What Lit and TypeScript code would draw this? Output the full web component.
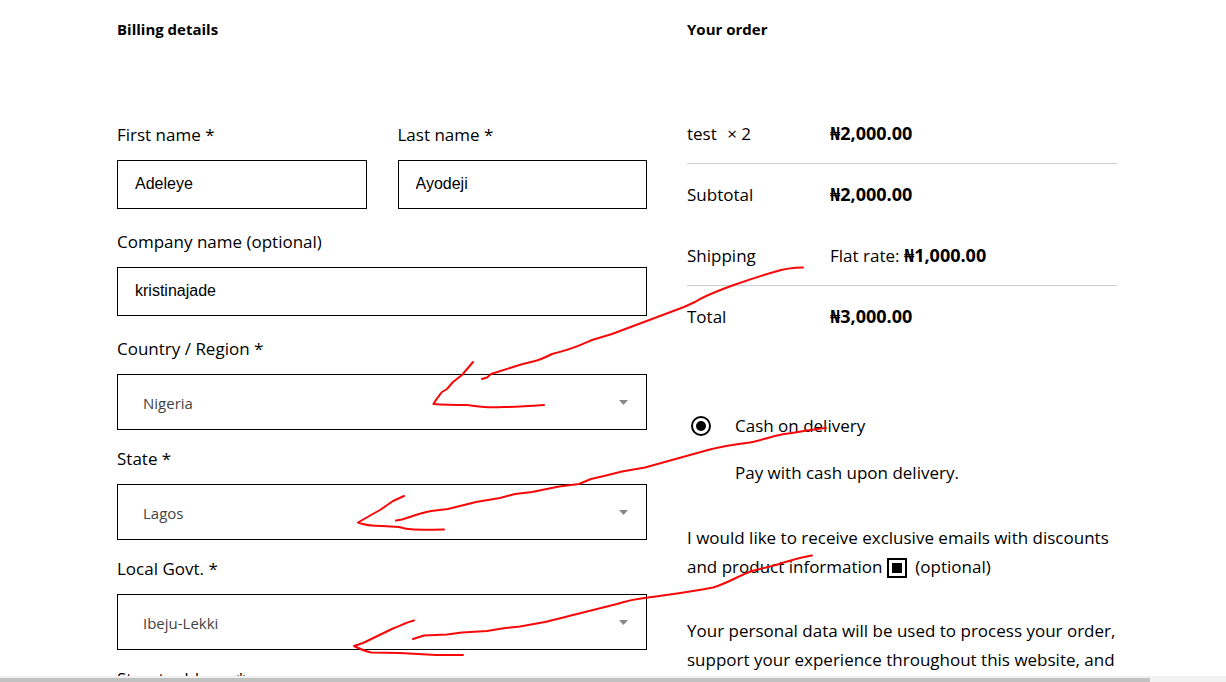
import { LitElement, html, css, svg } from "lit";
import { customElement } from "lit/decorators.js";

interface TextField {
  id: string;
  label: string;
  value: string;
}

const selects: TextField[] = [
  { id: "country", label: "Country / Region *", value: "Nigeria" },
  { id: "state", label: "State *", value: "Lagos" },
  { id: "lga", label: "Local Govt. *", value: "Ibeju-Lekki" },
];

const strokes = [
  "M803 267.500 C793 267.500 785 268.500 774 272 C760 276 745 281 731 286 C718 291 706 295 695 302 L684 307 L648 320.500 L612 334 L592 340 C580 345 577 348 552 354 C544 358 539 360 535 361 L521 364.500 L491 374 L487 377.500 L482 379",
  "M473 362 L462 375 L453 382 L447 389 L442 392 C438 397 436 399 433.500 404 C446 405 456 405 467 405 C480 407 490 408 503 407 C517 407 531 406 544 405",
  "M826 428 C812 429.500 798 432 784 434 C768 437 760 441 750 442.500 C732 445 718 447 708 450 L681 457.500 L645 467.500 L622 471.500 L604 476 L591 479 L579 484 L559 486.500 L532 492 L515 494 L500 498 L476 502 L448 509 L431 511 C421 513 413 516 402 519.500 L396 520.500",
  "M404 496 L393 501 L380 510 L371 515 L358 522.500 C364 525 372 526 382 526 L399 527 C408 530 415 530 444 529.500",
  "M812 555.500 C800 557.500 788 561 776 565 L752 571 C738 576 726 584 713 587.500 C690 592 672 594 648 597.500 C635 599 626 601 617 604 L571 615.500 C555 620 546 623 520 626.500 L502 628.500 L487 631 L462 632.500 L447 634.500 L424 635.500 L413 639",
  "M414 620.500 C407 622 402 625 393 628.500 L363 643 L354 646 C360 649 364 651 371 652.500 L400 653 L436 655 L463 655",
];

@customElement("app-root")
export class AppRoot extends LitElement {
  static styles = css`
    :host {
      display: flex;
      flex-direction: column;
      position: relative;
      height: 100vh;
      overflow: hidden;
      background: #fff;
      color: #000;
      font: 400 17px/29px "Open Sans", "Noto Sans", sans-serif;
    }
    *,
    *::before,
    *::after {
      box-sizing: border-box;
    }
    .page {
      flex: 1;
      min-height: 0;
      overflow: hidden;
      padding: 15px 109px 0 117px;
    }
    .checkout {
      display: grid;
      grid-template-columns: 53fr 43fr;
      column-gap: 40px;
    }
    h3 {
      margin: 0;
      font-size: 15px;
      font-weight: 700;
      line-height: 29px;
    }
    .fields {
      margin-top: 76px;
    }
    .pair {
      display: grid;
      grid-template-columns: 1fr 1fr;
      column-gap: 31px;
    }
    .field {
      display: flex;
      flex-direction: column;
      gap: 11px;
      margin-bottom: 18px;
    }
    .field.choice {
      margin-bottom: 14px;
    }
    input.text {
      width: 100%;
      height: 49px;
      margin: 0;
      padding: 0 17px 2px;
      border: 1px solid #000;
      border-radius: 0;
      background: #fff;
      color: #000;
      font: 400 16px "Liberation Sans", Arial, sans-serif;
    }
    .select {
      display: grid;
      align-items: center;
      justify-items: end;
    }
    .select > * {
      grid-area: 1 / 1;
    }
    select {
      appearance: none;
      width: 100%;
      height: 56px;
      padding: 2px 40px 0 25px;
      border: 1px solid #000;
      border-radius: 0;
      background: #fff;
      color: #444;
      font: 400 15px "Open Sans", "Noto Sans", sans-serif;
    }
    .caret {
      width: 9px;
      height: 5px;
      margin-right: 19px;
      fill: #888;
      pointer-events: none;
    }
    table {
      width: 100%;
      margin-top: 59px;
      border-collapse: separate;
      border-spacing: 0;
    }
    th,
    td {
      height: 61px;
      padding: 0;
      text-align: left;
      font-weight: inherit;
      vertical-align: middle;
    }
    th {
      width: 143px;
    }
    .ruled > * {
      border-bottom: 1px solid #cfcfcf;
    }
    b {
      font-size: 18px;
      font-weight: 700;
    }
    .qty {
      margin-left: 6px;
    }
    .payment {
      display: grid;
      grid-template-columns: 20px 1fr;
      column-gap: 24px;
      row-gap: 18px;
      align-items: center;
      margin: 64px 0 36px;
      padding-left: 4px;
    }
    .payment p {
      grid-column: 2;
    }
    p {
      margin: 0;
    }
    .mark {
      appearance: none;
      display: inline-grid;
      place-content: center;
      width: 20px;
      height: 20px;
      margin: 0;
      border: 2px solid #000;
      background: #fff;
    }
    .mark::before {
      content: "";
      width: 10px;
      height: 10px;
      background: #000;
    }
    .mark[type="radio"],
    .mark[type="radio"]::before {
      border-radius: 50%;
    }
    .mark[type="checkbox"] {
      margin-right: 4px;
      vertical-align: middle;
    }
    .optin {
      display: block;
    }
    .privacy {
      margin-top: 35px;
    }
    .ink {
      position: absolute;
      top: 0;
      left: 0;
      width: 1226px;
      height: 682px;
      fill: none;
      stroke: #f60808;
      stroke-width: 2;
      stroke-linecap: round;
      stroke-linejoin: round;
      pointer-events: none;
    }
    .scrollbar {
      flex: none;
      height: 6px;
      padding-top: 2px;
      background: #f1f1f1;
    }
    .thumb {
      width: 93.8%;
      height: 4px;
      background: #c1c1c1;
    }
  `;

  private textField(f: TextField) {
    return html`<div class="field">
      <label for=${f.id}>${f.label}</label>
      <input class="text" type="text" id=${f.id} .value=${f.value} />
    </div>`;
  }

  private selectField(f: TextField) {
    return html`<div class="field choice">
      <label for=${f.id}>${f.label}</label>
      <div class="select">
        <select id=${f.id}>
          <option selected>${f.value}</option>
        </select>
        <svg class="caret" viewBox="0 0 9 5" aria-hidden="true"><path d="M0 0H9L4.500 5Z" /></svg>
      </div>
    </div>`;
  }

  render() {
    return html`
      <main class="page">
        <form class="checkout">
          <section>
            <h3>Billing details</h3>
            <div class="fields">
              <div class="pair">
                ${this.textField({ id: "first", label: "First name *", value: "Adeleye" })}
                ${this.textField({ id: "last", label: "Last name *", value: "Ayodeji" })}
              </div>
              ${this.textField({ id: "company", label: "Company name (optional)", value: "kristinajade" })}
              ${selects.map((f) => this.selectField(f))}
              ${this.textField({ id: "street", label: "Street address *", value: "" })}
            </div>
          </section>
          <section>
            <h3>Your order</h3>
            <table>
              <tbody>
                <tr class="ruled">
                  <th scope="row">test <span class="qty">× 2</span></th>
                  <td><b>₦2,000.00</b></td>
                </tr>
                <tr>
                  <th scope="row">Subtotal</th>
                  <td><b>₦2,000.00</b></td>
                </tr>
                <tr class="ruled">
                  <th scope="row">Shipping</th>
                  <td>Flat rate: <b>₦1,000.00</b></td>
                </tr>
                <tr>
                  <th scope="row">Total</th>
                  <td><b>₦3,000.00</b></td>
                </tr>
              </tbody>
            </table>
            <div class="payment">
              <input class="mark" type="radio" id="cod" name="payment" checked />
              <label for="cod">Cash on delivery</label>
              <p>Pay with cash upon delivery.</p>
            </div>
            <label class="optin" for="optin"
              >I would like to receive exclusive emails with discounts and product information
              <input class="mark" type="checkbox" id="optin" checked /> (optional)</label
            >
            <p class="privacy">Your personal data will be used to process your order, support your experience throughout this website, and</p>
          </section>
        </form>
      </main>
      <div class="scrollbar"><div class="thumb"></div></div>
      <svg class="ink" viewBox="0 0 1226 682" aria-hidden="true">
        ${strokes.map((d) => svg`<path d=${d} />`)}
      </svg>
    `;
  }
}
